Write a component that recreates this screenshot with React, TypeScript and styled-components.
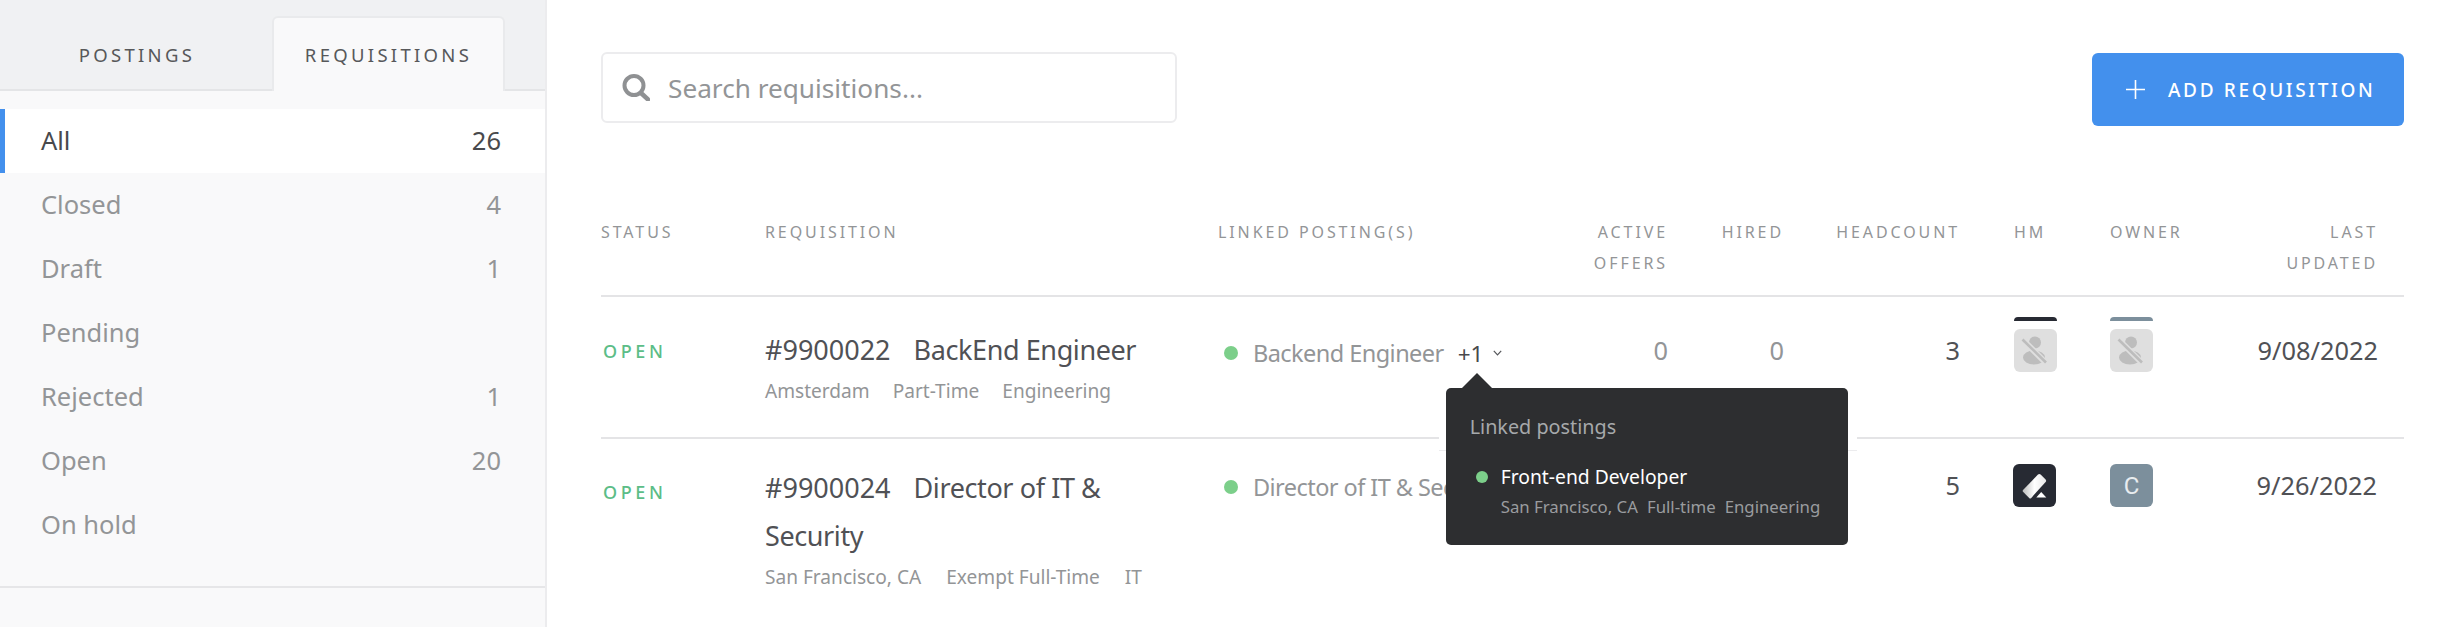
import styled, { createGlobalStyle } from 'styled-components';

const GlobalStyle = createGlobalStyle`
  html, body {
    margin: 0;
    height: 100%;
    overflow: hidden;
    background: #fff;
    font-family: "Noto Sans", "Liberation Sans", sans-serif;
    -webkit-font-smoothing: antialiased;
  }
  * { box-sizing: border-box; }
`;

const Page = styled.div`
  display: flex;
  width: 2440px;
  height: 627px;
`;

const Sidebar = styled.aside`
  width: 547px;
  flex: none;
  background: #f9f9fa;
  border-right: 2px solid #ececee;
`;

const TabBar = styled.div`
  display: flex;
  height: 91px;
  padding-top: 16px;
  background: #f0f1f3;
  border-bottom: 2px solid #e4e5e7;
`;

const Tab = styled.div<{ $active?: boolean }>`
  width: ${(p) => (p.$active ? '233px' : '274px')};
  height: 75px;
  padding-top: 22px;
  text-align: center;
  font-size: 18.5px;
  line-height: 30px;
  letter-spacing: 3.3px;
  color: #57585a;
  background: ${(p) => (p.$active ? '#f9f9fa' : 'transparent')};
  border: 2px solid ${(p) => (p.$active ? '#e9eaec' : 'transparent')};
  border-bottom: none;
  border-radius: 6px 6px 0 0;
  margin-right: ${(p) => (p.$active ? '0' : '-2px')};
`;

const StatusList = styled.ul`
  list-style: none;
  margin: 0;
  padding: 18px 0 29px;
  border-bottom: 2px solid #e6e6e8;
`;

const StatusItem = styled.li<{ $active?: boolean }>`
  display: flex;
  justify-content: space-between;
  align-items: center;
  height: 64px;
  padding: 0 44px 2px 41px;
  font-size: 25.5px;
  color: ${(p) => (p.$active ? '#48494c' : '#939597')};
  background: ${(p) => (p.$active ? '#fff' : 'transparent')};
  box-shadow: ${(p) => (p.$active ? 'inset 5px 0 0 #4390ed' : 'none')};
`;

const Main = styled.main`
  flex: 1;
  padding: 52px 36px 0 54px;
  position: relative;
`;

const Toolbar = styled.div`
  display: flex;
  justify-content: space-between;
  align-items: flex-start;
  height: 74px;
`;

const SearchBox = styled.div`
  display: flex;
  align-items: center;
  gap: 18px;
  width: 576px;
  height: 71px;
  padding-left: 19px;
  border: 2px solid #ececee;
  border-radius: 6px;
  font-size: 26.2px;
  color: #939597;
`;

const AddButton = styled.div`
  display: flex;
  align-items: center;
  gap: 23px;
  width: 312px;
  height: 73px;
  margin-top: 1px;
  padding-left: 34px;
  border-radius: 6px;
  background: #4390ed;
  color: #fff;
  font-size: 19px;
  font-weight: 500;
  letter-spacing: 2.65px;
`;

const gridColumns = '164px 453px 342px 108px 116px 176px 150px 140px 128px';

const HeaderRow = styled.div`
  display: grid;
  grid-template-columns: ${gridColumns};
  margin-top: 91px;
  height: 80px;
  border-bottom: 2px solid #e4e4e6;
`;

const HeaderCell = styled.div<{ $right?: boolean; $pad?: number }>`
  font-size: 16px;
  line-height: 31px;
  letter-spacing: 2.9px;
  color: #939597;
  text-align: ${(p) => (p.$right ? 'right' : 'left')};
  padding-left: ${(p) => p.$pad ?? 0}px;
`;

const Row = styled.div<{ $top: number; $height: number; $line?: boolean }>`
  display: grid;
  grid-template-columns: ${gridColumns};
  align-items: start;
  height: ${(p) => p.$height}px;
  padding-top: ${(p) => p.$top}px;
  border-bottom: ${(p) => (p.$line ? '2px solid #e4e4e6' : 'none')};
`;

const StatusCell = styled.div<{ $nudge: number }>`
  margin-top: ${(p) => p.$nudge}px;
  padding-left: 2px;
  font-size: 18px;
  font-weight: 500;
  line-height: 48px;
  letter-spacing: 3.6px;
  color: #5cbd87;
`;

const RequisitionCell = styled.div<{ $nudge: number }>`
  margin-top: ${(p) => p.$nudge}px;
  max-width: 385px;
`;

const RequisitionTitle = styled.div`
  font-size: 27px;
  line-height: 48px;
  letter-spacing: -0.4px;
  color: #505155;
`;

const RequisitionId = styled.span`
  margin-right: 23px;
  letter-spacing: 0;
`;

const Meta = styled.div<{ $gap: number }>`
  display: flex;
  gap: ${(p) => p.$gap}px;
  font-size: 19.1px;
  line-height: 34px;
  color: #939597;
`;

const LinkedCell = styled.div<{ $nudge: number }>`
  display: flex;
  align-items: center;
  height: 48px;
  margin-top: ${(p) => p.$nudge}px;
  padding-left: 6px;
  font-size: 23.5px;
  letter-spacing: -0.55px;
  color: #939597;
  white-space: nowrap;
  position: relative;
`;

const Dot = styled.span<{ $size: number }>`
  flex: none;
  width: ${(p) => p.$size}px;
  height: ${(p) => p.$size}px;
  border-radius: 50%;
  background: #7ccf8a;
`;

const LinkedName = styled.span`
  margin-left: 15px;
`;

const MoreTrigger = styled.span`
  display: flex;
  align-items: center;
  gap: 10px;
  margin-left: 14px;
  font-size: 22.5px;
  letter-spacing: 0;
  color: #48494c;
  position: relative;
`;

const Overlay = styled.div`
  position: absolute;
  top: 35px;
  left: -19px;
  width: 418px;
  z-index: 5;
  white-space: normal;
`;

const DividerPatch = styled.div`
  position: absolute;
  top: 63px;
  left: 0;
  width: 100%;
  height: 15px;
  background: #fff;
  border-bottom: 1px solid #ececee;
`;

const Bubble = styled.div`
  position: relative;
  margin: 15px 9px 0 7px;
  padding: 24px 24px 23px;
  background: #2d2e30;
  border-radius: 5px;
  &::before {
    content: '';
    position: absolute;
    top: -15px;
    left: 16px;
    border-left: 15px solid transparent;
    border-right: 15px solid transparent;
    border-bottom: 15px solid #2d2e30;
  }
`;

const BubbleTitle = styled.div`
  font-size: 19.8px;
  line-height: 30px;
  color: #a6a9ab;
`;

const BubbleItem = styled.div`
  display: grid;
  grid-template-columns: 12px 1fr;
  column-gap: 13px;
  align-items: center;
  margin: 20px 0 0 6px;
`;

const BubbleName = styled.div`
  font-size: 19.3px;
  line-height: 30px;
  color: #fff;
`;

const BubbleMeta = styled.div`
  grid-column: 2;
  display: flex;
  gap: 9px;
  font-size: 16.8px;
  line-height: 30px;
  color: #9a9c9f;
  white-space: nowrap;
`;

const NumberCell = styled.div<{ $strong?: boolean; $nudge: number; $inset?: number }>`
  margin-top: ${(p) => p.$nudge}px;
  padding-right: ${(p) => p.$inset ?? 0}px;
  text-align: right;
  font-size: 25.4px;
  line-height: 48px;
  color: ${(p) => (p.$strong ? '#505155' : '#939597')};
`;

const AvatarCell = styled.div<{ $pad?: number }>`
  display: flex;
  flex-direction: column;
  gap: 8px;
  padding-left: ${(p) => p.$pad ?? 0}px;
`;

const AvatarSliver = styled.div<{ $color: string }>`
  width: 43px;
  height: 4px;
  background: ${(p) => p.$color};
  border-radius: 6px 6px 0 0;
`;

const Avatar = styled.div<{ $color: string }>`
  display: flex;
  align-items: center;
  justify-content: center;
  width: 43px;
  height: 43px;
  border-radius: 6px;
  background: ${(p) => p.$color};
  color: #e8ecef;
  font-family: Roboto, sans-serif;
  font-size: 24px;
`;

function SearchIcon() {
  return (
    <svg width="28" height="27" viewBox="0 0 28 27" fill="none" stroke="#8f9193">
      <circle cx="12" cy="11.5" r="9.5" strokeWidth="4" />
      <path d="M19 19l7 6.5" strokeWidth="4.5" strokeLinecap="round" />
    </svg>
  );
}

function PlusIcon() {
  return (
    <svg width="19" height="19" viewBox="0 0 19 19" stroke="#fff" strokeWidth="1.6">
      <path d="M9.5 0v19M0 9.5h19" />
    </svg>
  );
}

function ChevronIcon() {
  return (
    <svg width="9" height="6" viewBox="0 0 9 6" fill="none" stroke="#55565a" strokeWidth="1.2">
      <path d="M.8.8l3.7 4 3.7-4" />
    </svg>
  );
}

function NoUserIcon() {
  return (
    <svg width="43" height="43" viewBox="0 0 43 43">
      <circle cx="21" cy="13.5" r="6" fill="#bdbdbd" />
      <ellipse cx="20" cy="28.5" rx="11" ry="7" fill="#bdbdbd" />
      <path d="M8 10l24 24" stroke="#dfdfdf" strokeWidth="6" />
      <path d="M8.5 10.5l23.5 23" stroke="#bdbdbd" strokeWidth="2.6" />
    </svg>
  );
}

function EraserLogo() {
  return (
    <svg width="43" height="43" viewBox="0 0 43 43">
      <defs>
        <linearGradient id="eraser" x1="0" y1="0" x2="1" y2="0">
          <stop offset="0" stopColor="#bcbcbc" />
          <stop offset="0.5" stopColor="#ffffff" />
          <stop offset="1" stopColor="#e8e8e8" />
        </linearGradient>
      </defs>
      <path d="M25 10.5a2 2 0 012.6 0l5 5a2 2 0 010 2.6L18 34.2a1.5 1.5 0 01-1.6 0L10 27.8a1.5 1.5 0 010-1.8z" fill="url(#eraser)" />
      <path d="M23.3 33.5h10L28.2 28z" fill="#fff" />
    </svg>
  );
}

const statuses = [
  { name: 'All', count: 26, active: true },
  { name: 'Closed', count: 4 },
  { name: 'Draft', count: 1 },
  { name: 'Pending' },
  { name: 'Rejected', count: 1 },
  { name: 'Open', count: 20 },
  { name: 'On hold' },
];

export default function App() {
  return (
    <>
      <GlobalStyle />
      <Page>
        <Sidebar>
          <TabBar>
            <Tab>POSTINGS</Tab>
            <Tab $active>REQUISITIONS</Tab>
          </TabBar>
          <StatusList>
            {statuses.map((s) => (
              <StatusItem key={s.name} $active={s.active}>
                <span>{s.name}</span>
                <span>{s.count}</span>
              </StatusItem>
            ))}
          </StatusList>
        </Sidebar>
        <Main>
          <Toolbar>
            <SearchBox>
              <SearchIcon />
              Search requisitions...
            </SearchBox>
            <AddButton>
              <PlusIcon />
              ADD REQUISITION
            </AddButton>
          </Toolbar>

          <HeaderRow>
            <HeaderCell>STATUS</HeaderCell>
            <HeaderCell>REQUISITION</HeaderCell>
            <HeaderCell>LINKED POSTING(S)</HeaderCell>
            <HeaderCell $right>ACTIVE<br />OFFERS</HeaderCell>
            <HeaderCell $right>HIRED</HeaderCell>
            <HeaderCell $right>HEADCOUNT</HeaderCell>
            <HeaderCell $pad={54}>HM</HeaderCell>
            <HeaderCell>OWNER</HeaderCell>
            <HeaderCell $right>LAST<br />UPDATED</HeaderCell>
          </HeaderRow>

          <Row $top={20} $height={142} $line>
            <StatusCell $nudge={10}>OPEN</StatusCell>
            <RequisitionCell $nudge={9}>
              <RequisitionTitle>
                <RequisitionId>#9900022</RequisitionId>BackEnd Engineer
              </RequisitionTitle>
              <Meta $gap={23}>
                <span>Amsterdam</span>
                <span>Part-Time</span>
                <span>Engineering</span>
              </Meta>
            </RequisitionCell>
            <LinkedCell $nudge={12}>
              <Dot $size={14} />
              <LinkedName>Backend Engineer</LinkedName>
              <MoreTrigger>
                +1
                <ChevronIcon />
                <Overlay>
                  <DividerPatch />
                  <Bubble>
                    <BubbleTitle>Linked postings</BubbleTitle>
                    <BubbleItem>
                      <Dot $size={12} />
                      <BubbleName>Front-end Developer</BubbleName>
                      <BubbleMeta>
                        <span>San Francisco, CA</span>
                        <span>Full-time</span>
                        <span>Engineering</span>
                      </BubbleMeta>
                    </BubbleItem>
                  </Bubble>
                </Overlay>
              </MoreTrigger>
            </LinkedCell>
            <NumberCell $nudge={9}>0</NumberCell>
            <NumberCell $nudge={9}>0</NumberCell>
            <NumberCell $nudge={9} $strong>3</NumberCell>
            <AvatarCell $pad={54}>
              <AvatarSliver $color="#272a33" />
              <Avatar $color="#dfdfdf"><NoUserIcon /></Avatar>
            </AvatarCell>
            <AvatarCell>
              <AvatarSliver $color="#7c8f9c" />
              <Avatar $color="#dfdfdf"><NoUserIcon /></Avatar>
            </AvatarCell>
            <NumberCell $nudge={9} $strong>9/08/2022</NumberCell>
          </Row>

          <Row $top={25} $height={188}>
            <StatusCell $nudge={4}>OPEN</StatusCell>
            <RequisitionCell $nudge={0}>
              <RequisitionTitle>
                <RequisitionId>#9900024</RequisitionId>Director of IT &amp; Security
              </RequisitionTitle>
              <Meta $gap={25}>
                <span>San Francisco, CA</span>
                <span>Exempt Full-Time</span>
                <span>IT</span>
              </Meta>
            </RequisitionCell>
            <LinkedCell $nudge={-1}>
              <Dot $size={14} />
              <LinkedName>Director of IT &amp; Security</LinkedName>
            </LinkedCell>
            <div />
            <div />
            <NumberCell $nudge={-3} $strong>5</NumberCell>
            <AvatarCell $pad={53}>
              <Avatar $color="#272a33"><EraserLogo /></Avatar>
            </AvatarCell>
            <AvatarCell>
              <Avatar $color="#7c8f9c">C</Avatar>
            </AvatarCell>
            <NumberCell $nudge={-3} $inset={1} $strong>9/26/2022</NumberCell>
          </Row>
        </Main>
      </Page>
    </>
  );
}
